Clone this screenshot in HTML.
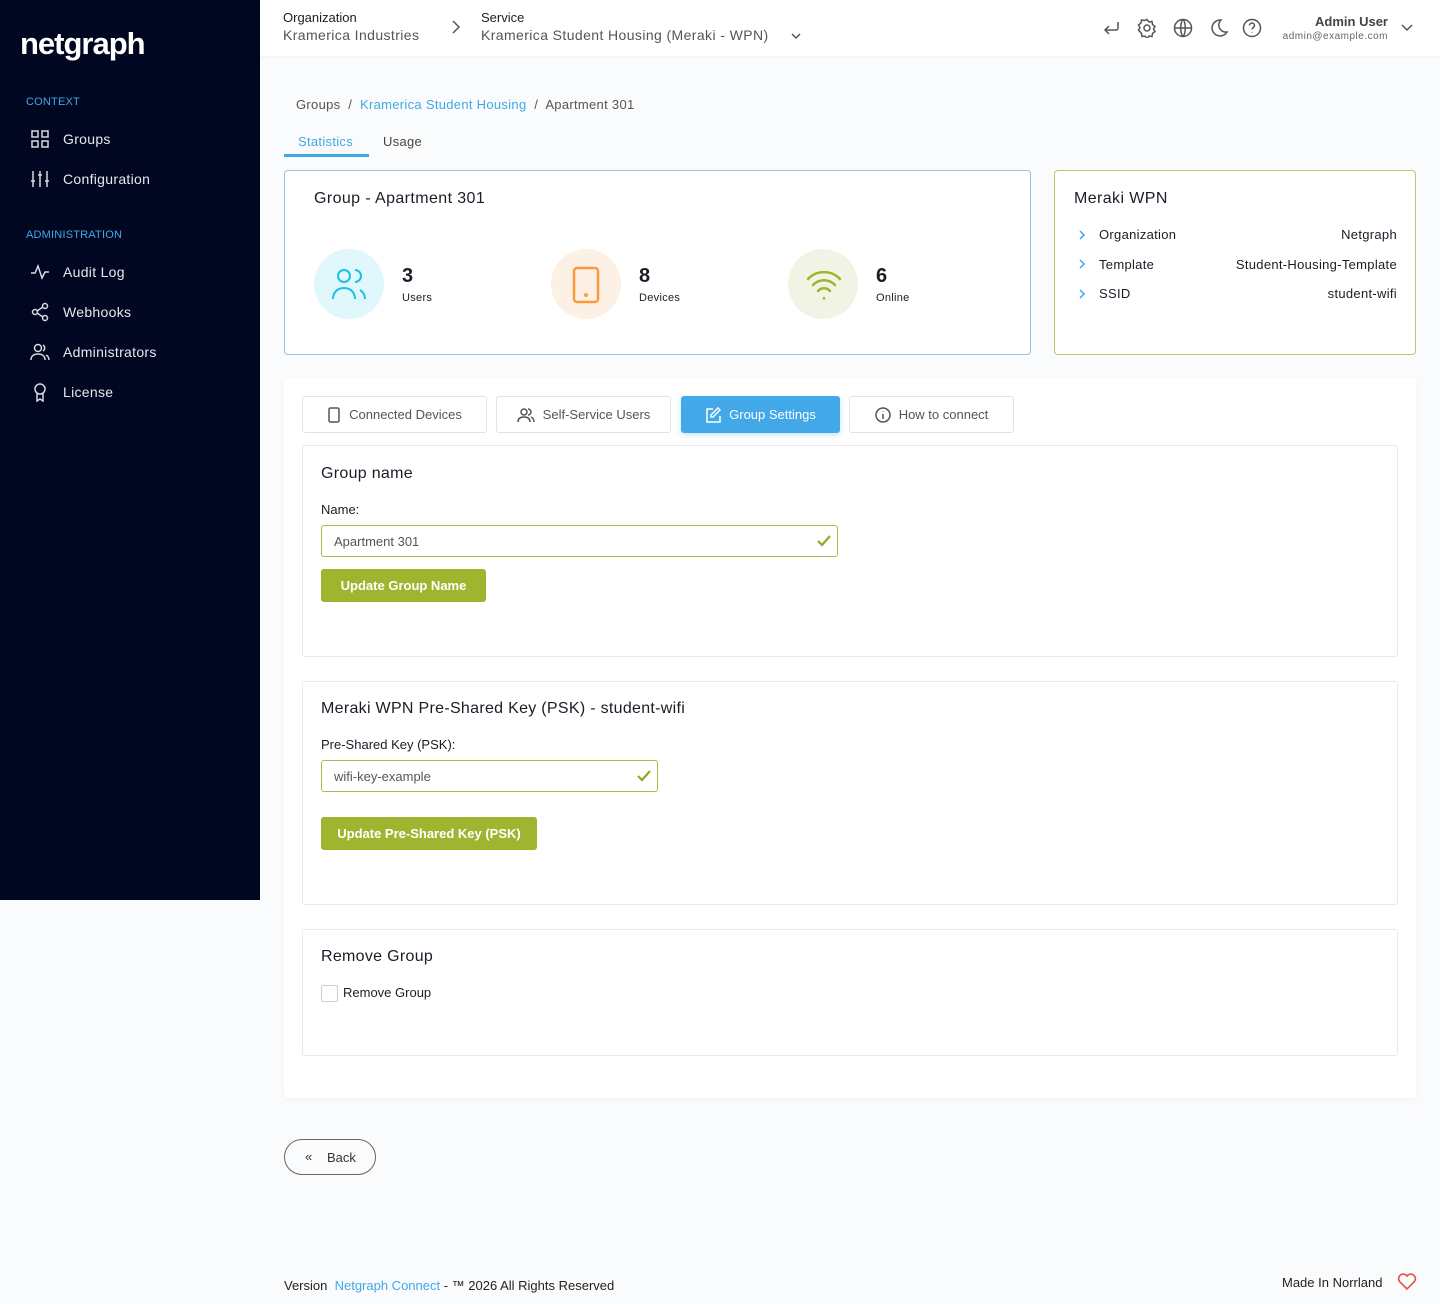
<!DOCTYPE html>
<html><head><meta charset="utf-8"><style>
*{box-sizing:border-box;margin:0;padding:0}
body{width:1440px;height:1304px;font-family:"Liberation Sans",sans-serif;background:#fafbfc;color:#1c1c28;position:relative;overflow:hidden;font-size:13px}
.sb{position:absolute;left:0;top:0;width:260px;height:900px;background:#020721;color:#e6e8ee}
.logo{position:absolute;left:20px;top:26px;font-size:31px;font-weight:bold;color:#fff;letter-spacing:-1px}
.sec{position:absolute;left:26px;font-size:11px;color:#3fa9e8;letter-spacing:.2px}
.it{position:absolute;left:30px;font-size:14px;display:flex;align-items:center;gap:13px;color:#e6e8ee;letter-spacing:.3px}
.it svg{width:20px;height:20px;stroke:#d7dae2;fill:none;stroke-width:1.5}
.hdr{position:absolute;left:260px;top:0;right:0;height:56px;background:#fff;box-shadow:0 1px 4px rgba(0,0,0,.04)}
.abs{position:absolute}
.ic{stroke:#555;fill:none;stroke-width:1.5}
.card{position:absolute;background:#fff;border-radius:4px}
.tab{position:absolute;top:396px;height:37px;border:1px solid #dfe2f0;border-radius:3px;background:#fff;display:flex;align-items:center;justify-content:center;gap:8px;font-size:13px;color:#555}
.box{position:absolute;left:302px;width:1096px;border:1px solid #e8e9ee;border-radius:3px;background:#fff}
.h3{position:absolute;left:18px;font-size:16px;color:#1c1c28;letter-spacing:.3px}
.inp{position:absolute;left:18px;height:32px;border:1px solid #a8bd4a;border-radius:3px;font-size:13px;color:#555;padding:8px 12px}
.btn{position:absolute;left:18px;height:33px;background:#9fb52f;border-radius:3px;color:#fff;font-weight:bold;font-size:13px;display:flex;align-items:center;justify-content:center}
</style></head><body>
<div class="sb">
<div class="logo">netgraph</div>
<div class="sec" style="top:96px">CONTEXT</div>
<div class="it" style="top:129px"><svg viewBox="0 0 20 20"><rect x="2" y="2" width="6" height="6"/><rect x="12" y="2" width="6" height="6"/><rect x="2" y="12" width="6" height="6"/><rect x="12" y="12" width="6" height="6"/></svg>Groups</div>
<div class="it" style="top:169px"><svg viewBox="0 0 20 20"><path d="M3 2v16M10 2v16M17 2v16M1 12h4M8 6h4M15 12h4"/></svg>Configuration</div>
<div class="sec" style="top:229px">ADMINISTRATION</div>
<div class="it" style="top:262px"><svg viewBox="0 0 20 20"><path d="M1 11h4l3-7 4 12 3-6h4"/></svg>Audit Log</div>
<div class="it" style="top:302px"><svg viewBox="0 0 20 20"><circle cx="5" cy="10" r="2.5"/><circle cx="15" cy="4" r="2.5"/><circle cx="15" cy="16" r="2.5"/><path d="M7 9l6-4M7 11l6 4"/></svg>Webhooks</div>
<div class="it" style="top:342px"><svg viewBox="0 0 20 20"><circle cx="8" cy="6" r="3.5"/><path d="M1 18c0-4 3-6 7-6s7 2 7 6M13 3a3.5 3.5 0 010 6M16 13c2 1 3 3 3 5"/></svg>Administrators</div>
<div class="it" style="top:382px"><svg viewBox="0 0 20 20"><circle cx="10" cy="7" r="5"/><path d="M7 11v8l3-2 3 2v-8"/></svg>License</div>
</div>
<div class="hdr">
<div class="abs" style="left:23px;top:10px;font-size:13px">Organization</div>
<div class="abs" style="left:23px;top:27px;font-size:14px;color:#555;letter-spacing:.4px">Kramerica Industries</div>
<svg class="abs ic" style="left:190px;top:20px" width="12" height="14" viewBox="0 0 12 14"><path d="M3 1l6 6-6 6"/></svg>
<div class="abs" style="left:221px;top:10px;font-size:13px">Service</div>
<div class="abs" style="left:221px;top:27px;font-size:14px;color:#555;letter-spacing:.4px">Kramerica Student Housing (Meraki - WPN)</div>
<svg class="abs ic" style="left:530px;top:32px" width="12" height="9" viewBox="0 0 12 9"><path d="M2 2l4 4 4-4"/></svg>
<svg class="abs ic" style="left:842px;top:18px" width="20" height="20" viewBox="0 0 20 20"><path d="M16 4v6a2 2 0 01-2 2H3M7 8l-4 4 4 4"/></svg>
<svg class="abs ic" style="left:877px;top:18px" width="20" height="20" viewBox="0 0 20 20"><circle cx="10" cy="10" r="3"/><path d="M10 1.5l2 2.5 3-.5.5 3 2.5 2-1.5 2.5 1.5 2.5-2.5 2-.5 3-3-.5-2 2.5-2-2.5-3 .5-.5-3L1.5 12 3 9.5 1.5 7l2.5-2 .5-3 3 .5z"/></svg>
<svg class="abs ic" style="left:913px;top:18px" width="20" height="20" viewBox="0 0 20 20"><circle cx="10" cy="10" r="8.5"/><path d="M1.5 10h17M10 1.5c-3 3-3 14 0 17M10 1.5c3 3 3 14 0 17"/></svg>
<svg class="abs ic" style="left:949px;top:18px" width="20" height="20" viewBox="0 0 20 20"><path d="M12 2a8 8 0 106 12A7 7 0 0112 2z"/></svg>
<svg class="abs ic" style="left:982px;top:18px" width="20" height="20" viewBox="0 0 20 20"><circle cx="10" cy="10" r="8.5"/><path d="M7.5 7.5a2.5 2.5 0 015 0c0 2-2.5 2-2.5 4M10 14v.5"/></svg>
<div class="abs" style="right:52px;top:14px;font-size:13px;font-weight:bold;color:#444">Admin User</div>
<div class="abs" style="right:52px;top:31px;font-size:10px;color:#666;letter-spacing:.5px">admin@example.com</div>
<svg class="abs ic" style="right:26px;top:22px" width="14" height="10" viewBox="0 0 14 10"><path d="M2 3l5 5 5-5"/></svg>
</div>
<div class="abs" style="left:296px;top:97px;color:#555;letter-spacing:.3px">Groups &nbsp;/&nbsp; <span style="color:#3fa9e8">Kramerica Student Housing</span> &nbsp;/&nbsp; Apartment 301</div>
<div class="abs" style="left:298px;top:134px;color:#3fa9e8;letter-spacing:.3px">Statistics</div>
<div class="abs" style="left:284px;top:154px;width:85px;height:3px;background:#3fa9e8"></div>
<div class="abs" style="left:383px;top:134px;color:#444;letter-spacing:.3px">Usage</div>
<div class="card" style="left:284px;top:170px;width:747px;height:185px;border:1px solid #8fc3ea">
<div class="abs" style="left:29px;top:19px;font-size:16px;letter-spacing:.4px">Group - Apartment 301</div>
<div class="abs" style="left:29px;top:78px;width:70px;height:70px;border-radius:50%;background:#e0f7fb"></div>
<svg class="abs" style="left:45px;top:94px;fill:none;stroke:#1cc0e0;stroke-width:2" width="40" height="40" viewBox="0 0 40 40"><circle cx="14" cy="11" r="6"/><path d="M3 34c0-7 5-11 11-11s11 4 11 11M25 5a6 6 0 010 12M30 25c3 2 5 5 5 9"/></svg>
<div class="abs" style="left:117px;top:94px;font-size:20px;font-weight:bold">3</div>
<div class="abs" style="left:117px;top:121px;font-size:11px;letter-spacing:.3px">Users</div>
<div class="abs" style="left:266px;top:78px;width:70px;height:70px;border-radius:50%;background:#fdf0e4"></div>
<svg class="abs" style="left:287px;top:95px;fill:none;stroke:#fb9a3a;stroke-width:2.5" width="28" height="38" viewBox="0 0 28 38"><rect x="2" y="2" width="24" height="34" rx="3"/><circle cx="14" cy="29" r=".8"/></svg>
<div class="abs" style="left:354px;top:94px;font-size:20px;font-weight:bold">8</div>
<div class="abs" style="left:354px;top:121px;font-size:11px;letter-spacing:.3px">Devices</div>
<div class="abs" style="left:503px;top:78px;width:70px;height:70px;border-radius:50%;background:#f1f4e4"></div>
<svg class="abs" style="left:519px;top:96px;fill:none;stroke:#9fb52f;stroke-width:2.5;stroke-linecap:round" width="40" height="36" viewBox="0 0 40 36"><path d="M4 12a22 22 0 0132 0M9 18a15 15 0 0122 0M14 24a8 8 0 0112 0M20 31v.5"/></svg>
<div class="abs" style="left:591px;top:94px;font-size:20px;font-weight:bold">6</div>
<div class="abs" style="left:591px;top:121px;font-size:11px;letter-spacing:.3px">Online</div>
</div>
<div class="card" style="left:1054px;top:170px;width:362px;height:185px;border:1px solid #b8c96a">
<div class="abs" style="left:19px;top:19px;font-size:16px;letter-spacing:.4px">Meraki WPN</div>
<svg class="abs" style="left:22px;top:58px;fill:none;stroke:#3fa9e8;stroke-width:1.5" width="10" height="72" viewBox="0 0 10 72"><path d="M3 2l4 4-4 4M3 31l4 4-4 4M3 61l4 4-4 4"/></svg>
<div class="abs" style="left:44px;top:49px;font-size:13px;line-height:29.5px;letter-spacing:.3px">Organization<br>Template<br>SSID</div>
<div class="abs" style="right:18px;top:49px;font-size:13px;line-height:29.5px;text-align:right;letter-spacing:.3px">Netgraph<br>Student-Housing-Template<br>student-wifi</div>
</div>
<div class="card" style="left:284px;top:378px;width:1132px;height:720px;box-shadow:0 2px 8px rgba(0,0,0,.04)"></div>
<div class="tab" style="left:302px;width:185px"><svg class="ic" width="14" height="16" viewBox="0 0 14 16"><rect x="2" y="1" width="10" height="14" rx="1.5"/></svg>Connected Devices</div>
<div class="tab" style="left:496px;width:175px"><svg class="ic" width="18" height="16" viewBox="0 0 18 16"><circle cx="7" cy="5" r="3"/><path d="M1 15c0-4 3-5 6-5s6 1 6 5M11 2a3 3 0 010 6M14 10c2 1 3 3 3 5"/></svg>Self-Service Users</div>
<div class="tab" style="left:681px;width:159px;background:#43a8e8;border-color:#43a8e8;color:#fff;box-shadow:0 2px 6px rgba(67,168,232,.3)"><svg style="fill:none;stroke:#fff;stroke-width:1.5" width="16" height="16" viewBox="0 0 16 16"><path d="M8 2H2v13h13V9M13 1l2 2-7 7H6V8z"/></svg>Group Settings</div>
<div class="tab" style="left:849px;width:165px"><svg class="ic" width="16" height="16" viewBox="0 0 16 16"><circle cx="8" cy="8" r="7"/><path d="M8 7v5M8 4.5v.5"/></svg>How to connect</div>
<div class="box" style="top:445px;height:212px">
<div class="h3" style="top:19px">Group name</div>
<div class="abs" style="left:18px;top:56px">Name:</div>
<div class="inp" style="top:79px;width:517px">Apartment 301</div>
<svg class="abs" style="left:513px;top:88px;fill:none;stroke:#8eaa2a;stroke-width:2.2" width="16" height="14" viewBox="0 0 16 14"><path d="M2 7l4 4 8-9"/></svg>
<div class="btn" style="top:123px;width:165px">Update Group Name</div>
</div>
<div class="box" style="top:681px;height:224px">
<div class="h3" style="top:18px">Meraki WPN Pre-Shared Key (PSK) - student-wifi</div>
<div class="abs" style="left:18px;top:55px">Pre-Shared Key (PSK):</div>
<div class="inp" style="top:78px;width:337px">wifi-key-example</div>
<svg class="abs" style="left:333px;top:87px;fill:none;stroke:#8eaa2a;stroke-width:2.2" width="16" height="14" viewBox="0 0 16 14"><path d="M2 7l4 4 8-9"/></svg>
<div class="btn" style="top:135px;width:216px">Update Pre-Shared Key (PSK)</div>
</div>
<div class="box" style="top:929px;height:127px">
<div class="h3" style="top:18px">Remove Group</div>
<div class="abs" style="left:18px;top:55px;width:17px;height:17px;border:1px solid #ccc;border-radius:2px"></div>
<div class="abs" style="left:40px;top:55px">Remove Group</div>
</div>
<div class="abs" style="left:284px;top:1139px;width:92px;height:36px;border:1px solid #666;border-radius:18px;color:#333"><span class="abs" style="left:20px;top:9px">«</span><span class="abs" style="left:42px;top:10px">Back</span></div>
<div class="abs" style="left:284px;top:1278px;color:#222">Version &nbsp;<span style="color:#3fa9e8">Netgraph Connect</span> - ™ 2026 All Rights Reserved</div>
<div class="abs" style="left:1282px;top:1275px;color:#222">Made In Norrland</div>
<svg class="abs" style="left:1397px;top:1273px;fill:none;stroke:#e5534b;stroke-width:1.6" width="20" height="18" viewBox="0 0 20 18"><path d="M10 16L2.5 8.5A4.5 4.5 0 0110 3a4.5 4.5 0 017.5 5.5z"/></svg>
</body></html>
